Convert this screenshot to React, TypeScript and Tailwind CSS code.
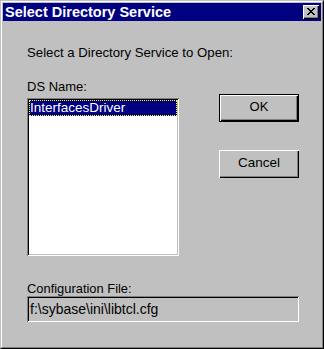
const raised = "shadow-[inset_1px_1px_0_#fff,inset_-1px_-1px_0_#000,inset_-2px_-2px_0_#808080]";
const sunken = "shadow-[inset_1px_1px_0_#808080,inset_-1px_-1px_0_#fff,inset_2px_2px_0_#000,inset_-2px_-2px_0_#c0c0c0]";

const CloseGlyph = () => (
  <svg width="8" height="7" viewBox="0 0 8 7" shapeRendering="crispEdges">
    <path
      fill="#000"
      d="M0 0h2v1H0zM6 0h2v1H6zM1 1h2v1H1zM5 1h2v1H5zM2 2h4v1H2zM3 3h2v1H3zM2 4h4v1H2zM1 5h2v1H1zM5 5h2v1H5zM0 6h2v1H0zM6 6h2v1H6z"
    />
  </svg>
);

export default function App() {
  return (
    <div className="w-[324px] h-[349px] bg-[#c0c0c0] font-['Liberation_Sans',Arial,sans-serif] text-black border border-t-[#c0c0c0] border-l-[#c0c0c0] border-r-black border-b-black">
      <div className="h-full border border-t-white border-l-white border-r-[#808080] border-b-[#808080] p-px flex flex-col">
        {/* title bar */}
        <div className="h-[18px] bg-[#000080] flex items-center justify-between pl-[2px] pr-[2px]">
          <span className="text-white font-bold text-[14.5px] leading-[18px]">Select Directory Service</span>
          <button className={`w-[16px] h-[14px] bg-[#c0c0c0] flex items-center justify-center pr-px pb-px ${raised}`}>
            <CloseGlyph />
          </button>
        </div>

        <div className="flex-1 pl-[24px] pt-[24px]">
          <p className="text-[13.2px] leading-[15px]">Select a Directory Service to Open:</p>

          <div className="flex items-start mt-[19px]">
            <div className="w-[152px]">
              <p className="text-[13px] leading-[15px]">DS Name:</p>
              <div className={`mt-[4px] h-[158px] bg-white p-[2px] ${sunken}`}>
                <div className="h-[16px] bg-[#000080] border border-dotted border-[#ffff00] text-white text-[13.5px] leading-[14px]">
                  InterfacesDriver
                </div>
              </div>
            </div>

            <div className="ml-[40px] pt-[15px] flex flex-col">
              <button className={`w-[80px] h-[28px] border border-black bg-[#c0c0c0] flex items-center justify-center pb-[3px] text-[13px] leading-[15px] ${raised}`}>
                OK
              </button>
              <button className={`mt-[28px] w-[80px] h-[28px] bg-[#c0c0c0] flex items-center justify-center pb-[3px] text-[13.5px] leading-[15px] ${raised}`}>
                Cancel
              </button>
            </div>
          </div>

          <p className="mt-[25px] text-[12.9px] leading-[15px]">Configuration File:</p>
          <div className={`w-[272px] h-[26px] p-[2px] ${sunken}`}>
            <div className="pl-px text-[14px] leading-[22px]">f:\sybase\ini\libtcl.cfg</div>
          </div>
        </div>
      </div>
    </div>
  );
}
